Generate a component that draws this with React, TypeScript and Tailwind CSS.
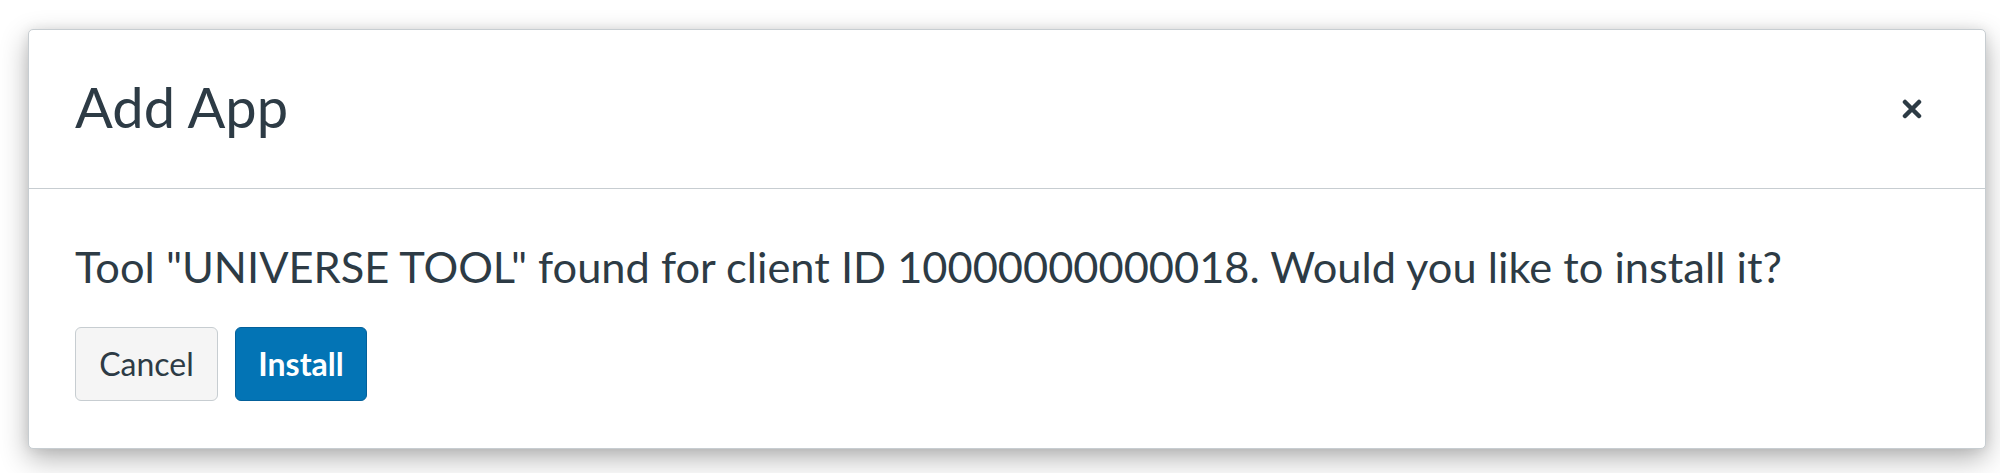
export default function App() {
  return (
    <main
      className="w-[2000px] h-[473px] bg-white overflow-hidden pt-[29px] pl-[28px]"
      style={{ fontFamily: "Lato, 'Liberation Sans', sans-serif" }}
    >
      {/* Dialog */}
      <div className="w-[1958px] h-[420px] bg-white border border-[#c7cdd1] rounded-[5px] shadow-[0_10px_28px_rgba(0,0,0,0.3),0_0_12px_rgba(0,0,0,0.08)] flex flex-col">
        {/* Header */}
        <div className="h-[159px] shrink-0 flex items-center justify-between pl-[46px] pr-[63px] border-b border-[#c7cdd1]">
          <h2 className="text-[56px] leading-none text-[#2d3b45] font-normal mb-[4px]">Add App</h2>
          <button className="w-[20px] h-[20px] flex items-center justify-center" aria-label="Close">
            <svg viewBox="0 0 20 20" className="w-[20px] h-[20px]">
              <path d="M3 3L17 17M17 3L3 17" stroke="#2d3b45" strokeWidth="4.5" strokeLinecap="round" />
            </svg>
          </button>
        </div>

        {/* Body */}
        <div className="px-[46px] pt-[51px]">
          <p className="text-[43.4px] leading-[1.2] text-[#2d3b45]">
            Tool "UNIVERSE TOOL" found for client ID 10000000000018. Would you like to install it?
          </p>
          <div className="flex gap-[17px] mt-[35px]">
            <button className="w-[143px] h-[74px] flex items-center justify-center rounded-[6px] bg-[#f5f5f5] border border-[#c7cdd1] text-[32px] text-[#2d3b45]">
              Cancel
            </button>
            <button className="w-[132px] h-[74px] flex items-center justify-center rounded-[6px] bg-[#0374b5] border border-[#03609a] text-[32px] font-bold text-white">
              Install
            </button>
          </div>
        </div>
      </div>
    </main>
  );
}
